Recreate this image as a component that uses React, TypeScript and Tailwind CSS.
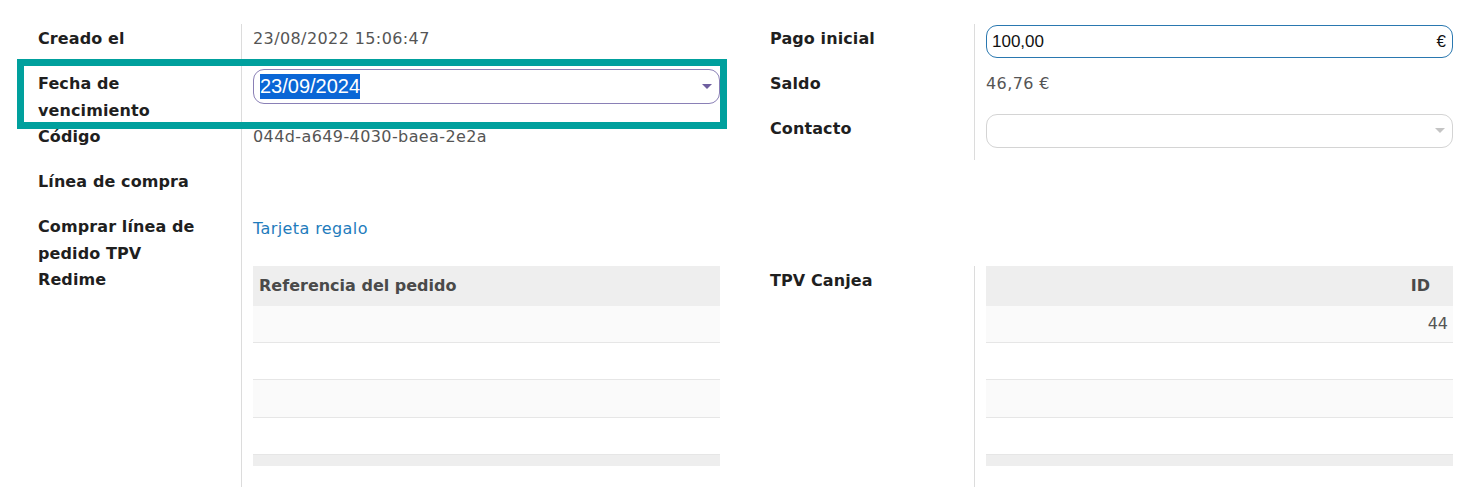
import React from "react";

const labelBase =
  "shrink-0 pr-3 pt-[2px] text-[16px] leading-[26.5px] font-bold text-[#1f1f1f] tracking-[0.1px]";
const labelL = "w-[203px] " + labelBase;
const labelR = "w-[204px] " + labelBase;
const valueCls = "flex-1 border-l border-[#dcdcdc] pl-[11px]";
const valText = "pt-[2px] text-[16px] leading-[26px] text-[#555555] tracking-[0.4px]";

function Caret({ color }: { color: string }) {
  return (
    <svg width="10" height="6" viewBox="0 0 10 6" className="shrink-0">
      <path d="M0 0 L10 0 L5 5 Z" fill={color} />
    </svg>
  );
}

function TableRows({ cells }: { cells: string[] }) {
  const heights = ["h-[37px]", "h-[37px]", "h-[38px]", "h-[37px]"];
  return (
    <>
      {heights.map((h, i) => (
        <div
          key={i}
          className={`${h} flex items-center justify-end pr-[5px] border-b border-[#e6e6e6] ${
            i % 2 === 0 ? "bg-[#fafafa]" : "bg-white"
          } text-[16px] text-[#555555]`}
        >
          {cells[i] ?? ""}
        </div>
      ))}
      <div className="h-[11px] bg-[#eeeeee]" />
    </>
  );
}

export default function App() {
  return (
    <div className="relative w-[1481px] h-[503px] bg-white overflow-hidden font-['DejaVu_Sans',sans-serif]">
      <div className="flex pl-[38px] pr-[28px] pt-[24px]">
        {/* Left group */}
        <div className="w-[682px] flex flex-col">
          <div className="flex h-[46px]">
            <div className={labelL}>Creado el</div>
            <div className={valueCls}>
              <div className={valText}>23/08/2022 15:06:47</div>
            </div>
          </div>
          <div className="flex h-[53px]">
            <div className={labelL + " pt-px"}>
              Fecha de
              <br />
              vencimiento
            </div>
            <div className={valueCls}>
              <div className="-mt-px h-[35px] rounded-[11px] border border-[#8a80b6] flex items-center pl-[6px] pr-[7px] font-['Liberation_Sans',sans-serif]">
                <span className="bg-[#0a66d6] text-white text-[20px] leading-[25px]">
                  23/09/2024
                </span>
                <div className="flex-1" />
                <Caret color="#6f5fa0" />
              </div>
            </div>
          </div>
          <div className="flex h-[45px]">
            <div className={labelL + " pt-px"}>Código</div>
            <div className={valueCls}>
              <div className={valText.replace("pt-[2px]", "pt-px")}>044d-a649-4030-baea-2e2a</div>
            </div>
          </div>
          <div className="flex h-[45px]">
            <div className={labelL + " pt-px"}>Línea de compra</div>
            <div className={valueCls} />
          </div>
          <div className="flex h-[274px]">
            <div className={labelL + " pt-px"}>
              Comprar línea de
              <br />
              pedido TPV
              <br />
              Redime
            </div>
            <div className={valueCls}>
              <div className="mt-[3px] text-[16px] leading-[26px] text-[#1f7cbc] tracking-[0.4px]">
                Tarjeta regalo
              </div>
              <div className="mt-[24px]">
                <div className="h-[40px] bg-[#eeeeee] flex items-center pl-[6px] text-[16px] font-bold text-[#4a4a4a]">
                  Referencia del pedido
                </div>
                <TableRows cells={[]} />
              </div>
            </div>
          </div>
        </div>

        <div className="w-[50px] shrink-0" />

        {/* Right group */}
        <div className="w-[683px] flex flex-col">
          <div className="flex h-[46px]">
            <div className={labelR}>Pago inicial</div>
            <div className={valueCls}>
              <div className="mt-px h-[33px] rounded-[11px] border border-[#2a78b0] flex items-center pl-[5px] pr-[6px] font-['Liberation_Sans',sans-serif] text-[17px] text-[#111111]">
                <span>100,00</span>
                <div className="flex-1" />
                <span>€</span>
              </div>
            </div>
          </div>
          <div className="flex h-[45px]">
            <div className={labelR + " pt-px"}>Saldo</div>
            <div className={valueCls}>
              <div className={valText.replace("pt-[2px]", "pt-px")}>46,76 €</div>
            </div>
          </div>
          <div className="flex h-[45px]">
            <div className={labelR + " pt-px"}>Contacto</div>
            <div className={valueCls}>
              <div className="-mt-px h-[34px] rounded-[11px] border border-[#d4d4d4] flex items-center justify-end pr-[7px]">
                <Caret color="#c4c4c4" />
              </div>
            </div>
          </div>
          <div className="flex h-[221px] mt-[106px]">
            <div className={labelR}>TPV Canjea</div>
            <div className={valueCls}>
              <div className="h-[40px] bg-[#eeeeee] flex items-center justify-end pr-[23px] text-[16px] font-bold text-[#4a4a4a]">
                ID
              </div>
              <TableRows cells={["44"]} />
            </div>
          </div>
        </div>
      </div>

      {/* highlight annotation */}
      <div className="absolute left-[17px] top-[59px] w-[710px] h-[70px] border-[7px] border-[#00a09d] pointer-events-none" />
    </div>
  );
}
